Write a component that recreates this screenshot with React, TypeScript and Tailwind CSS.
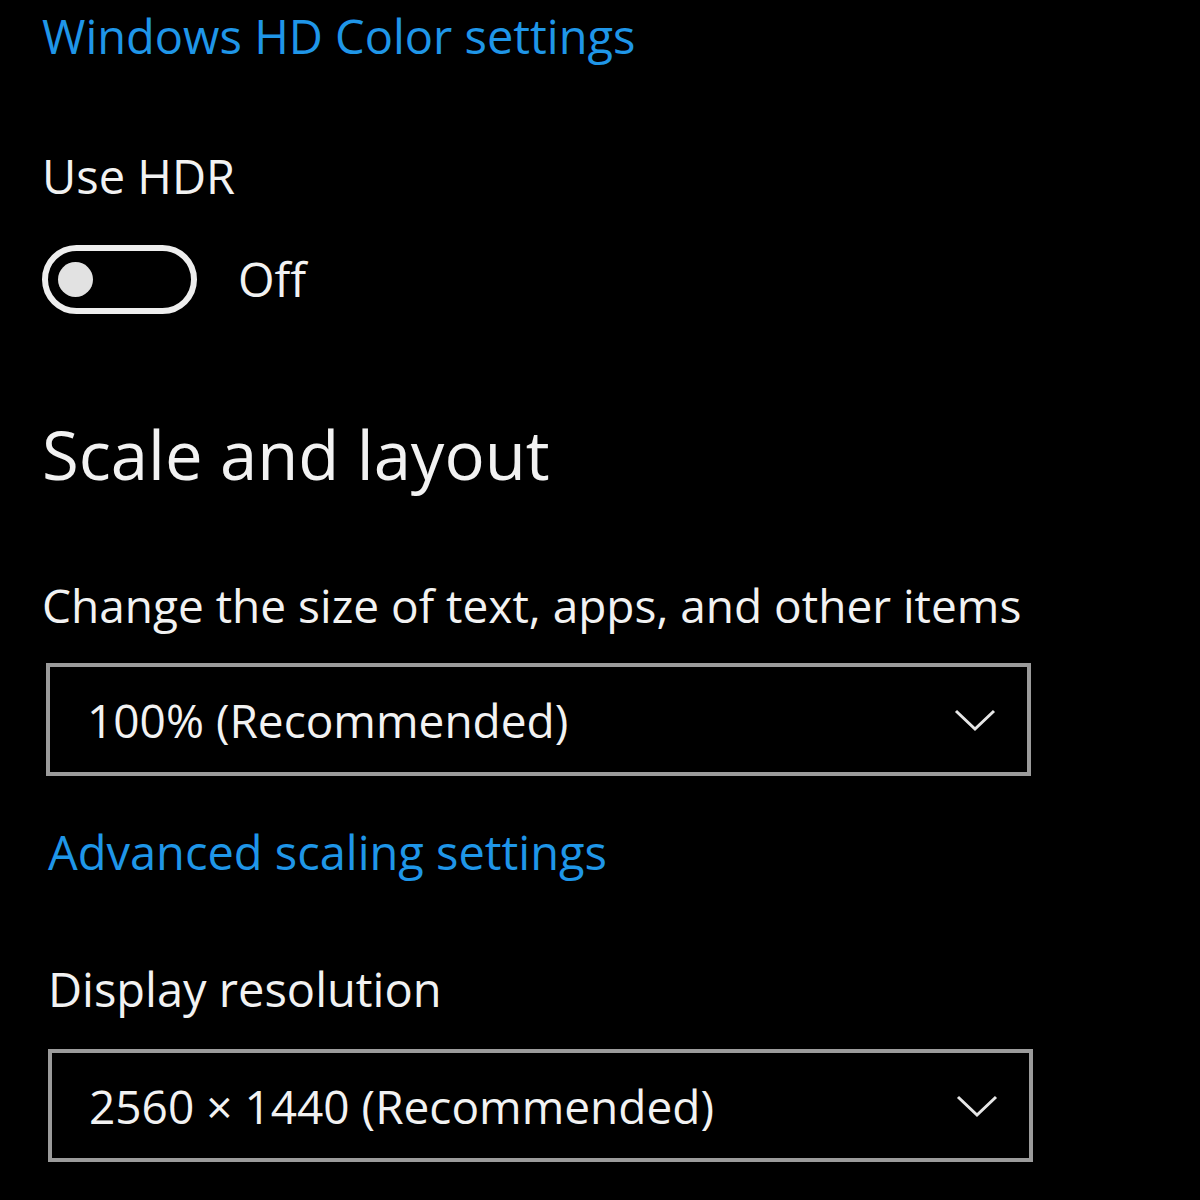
import React from 'react'

const font = { fontFamily: '"Open Sans", "Noto Sans", sans-serif' }

function Chevron() {
  return (
    <svg width="42" height="24" viewBox="0 0 42 24" fill="none">
      <path d="M2 3 L21 21 L40 3" stroke="#e6e6e6" strokeWidth="3" />
    </svg>
  )
}

function Dropdown({ value }: { value: string }) {
  return (
    <div className="flex h-[113px] w-[985px] items-center justify-between border-[4px] border-[#9b9b9b] pl-[37px] pr-[31px]">
      <span className="text-[46px] font-medium leading-none text-[#f2f2f2]">{value}</span>
      <Chevron />
    </div>
  )
}

export default function App() {
  return (
    <div className="min-h-[1200px] w-[1200px] overflow-hidden bg-black pl-[42px] pt-[13px]" style={font}>
      <div className="flex flex-col items-start">
        <a className="text-[47px] leading-none text-[#1f96e8]">Windows HD Color settings</a>

        <div className="mt-[93px] text-[47px] font-medium leading-none text-[#f2f2f2]">Use HDR</div>

        <div className="mt-[45px] flex items-center gap-[41px]">
          <div className="flex h-[69px] w-[155px] items-center rounded-full border-[6px] border-[#eeeeee] pl-[10px]">
            <div className="h-[35px] w-[35px] rounded-full bg-[#e2e2e2]" />
          </div>
          <span className="text-[47px] font-medium leading-none text-[#f2f2f2]">Off</span>
        </div>

        <h1 className="mt-[107px] text-[67px] font-medium leading-none text-[#f2f2f2]">Scale and layout</h1>

        <div className="mt-[94px] text-[46px] font-medium leading-none text-[#f2f2f2]">
          Change the size of text, apps, and other items
        </div>

        <div className="ml-[4px] mt-[35px]">
          <Dropdown value="100% (Recommended)" />
        </div>

        <a className="ml-[6px] mt-[53px] text-[47px] leading-none text-[#1f96e8]">Advanced scaling settings</a>

        <div className="ml-[6px] mt-[90px] text-[47px] font-medium leading-none text-[#f2f2f2]">Display resolution</div>

        <div className="ml-[6px] mt-[36px]">
          <Dropdown value="2560 × 1440 (Recommended)" />
        </div>
      </div>
    </div>
  )
}
